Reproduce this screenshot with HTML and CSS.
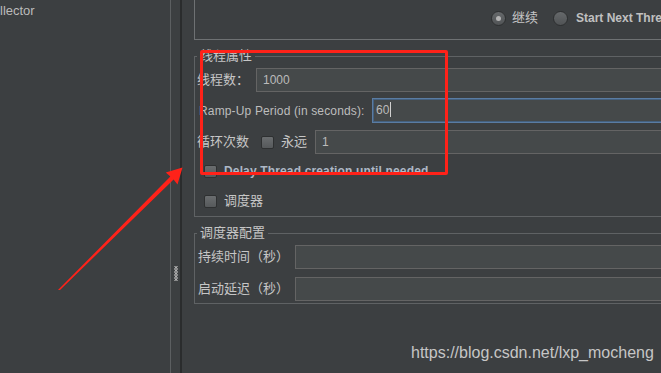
FILE: index.html
```html
<!doctype html>
<html><head>
	<meta charset="utf-8">
	<title>线程组</title>
	<link rel="stylesheet" href="styles.css">
</head><body>
	<div class="frame">
		<div class="tree">
			<div class="tree-item">llector</div>
		</div>
		<div class="splitter">
			<svg class="grip" width="5" height="16" viewBox="0 0 5 16">
				<polyline points="0.5,0 3.5,3 0.5,6 3.5,9 0.5,12 3.5,15" fill="none" stroke="#d6d6d6" stroke-width="1"/>
				<polyline points="3.5,0 0.5,3 3.5,6 0.5,9 3.5,12 0.5,15" fill="none" stroke="#d6d6d6" stroke-width="1"/>
			</svg>
		</div>
		<div class="main">
			<div class="options">
				<span class="radio on"></span><span class="opt cjk">继续</span>
				<span class="radio second"></span><span class="opt strong">Start Next Thread Loop</span>
			</div>

			<fieldset class="group props">
				<legend class="cjk">线程属性</legend>
				<div class="row r1">
					<span class="label cjk w-threads">线程数：</span>
					<div class="field">1000</div>
				</div>
				<div class="row r2">
					<span class="label w-ramp latin">Ramp-Up Period (in seconds):</span>
					<div class="field focus">60<span class="caret"></span></div>
				</div>
				<div class="row r3">
					<span class="label cjk w-loop">循环次数</span>
					<span class="check"></span>
					<span class="label cjk forever">永远</span>
					<div class="field loops">1</div>
				</div>
				<div class="row r4">
					<span class="check indent"></span>
					<span class="label latin strong delay">Delay Thread creation until needed</span>
				</div>
				<div class="row r5">
					<span class="check indent"></span>
					<span class="label cjk">调度器</span>
				</div>
			</fieldset>

			<fieldset class="group sched">
				<legend class="cjk">调度器配置</legend>
				<div class="row s1">
					<span class="label cjk w-sched">持续时间（秒）</span>
					<div class="field"></div>
				</div>
				<div class="row s2">
					<span class="label cjk w-sched">启动延迟（秒）</span>
					<div class="field"></div>
				</div>
			</fieldset>
		</div>
	</div>

	<div class="mark-box"></div>
	<svg class="mark-arrow" width="661" height="373" viewBox="0 0 661 373">
		<polygon points="58,290 60,290 173.6,179.6 177.5,184.5 182.5,167.5 165.8,172.6 170.4,176.6" fill="#ff2219"/>
	</svg>
	<div class="watermark">https://blog.csdn.net/lxp_mocheng</div>
</body></html>
```

FILE: styles.css
```css
html, body {
	margin: 0;
}

body {
	position: relative;
	width: 661px;
	height: 373px;
	overflow: hidden;
	background: #3c3f41;
	color: #bbbbbb;
	font: 12px/14px "Liberation Sans", "Noto Sans CJK SC", sans-serif;
}

.frame {
	display: flex;
	height: 373px;
}

.tree {
	width: 170px;
	flex-shrink: 0;
	border-right: 1px solid #5c5f61;
	overflow: hidden;
}

.tree-item {
	font-size: 13px;
	line-height: 15px;
	padding-top: 3px;
	white-space: nowrap;
}

.splitter {
	width: 11px;
	flex-shrink: 0;
	border-right: 2px solid #2a2c2d;
	padding: 266px 0 0 3px;
	box-sizing: border-box;
}

.grip {
	display: block;
}

.main {
	flex: 1;
	min-width: 0;
	overflow: hidden;
	padding-left: 12px;
}

/* top box with the radio buttons */
.options {
	width: 600px;
	height: 40px;
	padding: 0 0 3px 296px;
	box-sizing: border-box;
	border-left: 1px solid #6e7173;
	border-bottom: 1px solid #6e7173;
	display: flex;
	align-items: center;
	white-space: nowrap;
}

.radio {
	width: 15px;
	height: 15px;
	flex-shrink: 0;
	box-sizing: border-box;
	border-radius: 50%;
	border: 1px solid #2d2f30;
	background: linear-gradient(#66696b, #505355);
	position: relative;
	margin-right: 6px;
}

.radio.on::after {
	content: "";
	position: absolute;
	left: 4px;
	top: 4px;
	width: 5px;
	height: 5px;
	border-radius: 50%;
	background: #b4b4b4;
}

.radio.second {
	margin-left: 15px;
	margin-right: 8px;
}

.opt {
	color: #c0c0c0;
}

.strong {
	font-weight: bold;
}

.cjk {
	font-size: 13px;
	color: #c6c6c6;
}

/* titled groups */
.group {
	width: 600px;
	min-width: 0;
	margin: 9px 0 0;
	padding: 5px 0 4px 2px;
	box-sizing: border-box;
	border: 1px solid #5f6264;
}

.group legend {
	padding: 0 3px;
	margin: 0;
	line-height: 14px;
}

.sched {
	padding-bottom: 2px;
}

.row {
	display: flex;
	align-items: center;
	height: 24px;
}

.props .r2 {
	margin-top: 6px;
	height: 25px;
}

.props .r3 {
	margin-top: 7px;
}

.props .r4 {
	margin-top: 6px;
	height: 22px;
}

.props .r5 {
	margin-top: 8px;
	height: 22px;
}

.sched .s2 {
	margin-top: 8px;
}

.label {
	flex-shrink: 0;
	white-space: nowrap;
}

.latin {
	letter-spacing: 0.15px;
	color: #bdbdbd;
}

.w-threads {
	width: 59px;
}

.w-ramp {
	width: 175px;
	padding-left: 2px;
	box-sizing: border-box;
}

.w-loop {
	width: 64px;
}

.forever {
	margin-left: 7px;
	width: 34px;
}

.w-sched {
	width: 98px;
	padding-left: 1px;
	box-sizing: border-box;
}

.delay {
	color: #aeb8c6;
}

.field {
	flex: 1;
	height: 24px;
	box-sizing: border-box;
	border: 1px solid #646464;
	background: #45494a;
	padding: 0 6px;
	line-height: 22px;
	color: #bbbbbb;
	white-space: nowrap;
}

.field.focus {
	height: 25px;
	border: 1px solid #5a7ca3;
	box-shadow: inset 0 0 0 1px #44607f;
	padding-left: 3px;
	line-height: 23px;
}

.caret {
	display: inline-block;
	width: 1px;
	height: 15px;
	margin-left: 1px;
	vertical-align: -3px;
	background: #d0d0d0;
}

.check {
	width: 13px;
	height: 13px;
	flex-shrink: 0;
	box-sizing: border-box;
	border: 1px solid #2e3031;
	border-radius: 2px;
	background: linear-gradient(#6a6d6f, #56595b);
}

.check.indent {
	margin: 0 7px 0 7px;
}

/* annotations drawn over the screenshot */
.mark-box {
	position: absolute;
	left: 200px;
	top: 50px;
	width: 248px;
	height: 125px;
	box-sizing: border-box;
	border: 3px solid #ff2219;
	border-radius: 2px;
}

.mark-arrow {
	position: absolute;
	left: 0;
	top: 0;
	pointer-events: none;
}

.watermark {
	position: absolute;
	left: 411px;
	top: 344px;
	font: 16px/18px "Liberation Sans", sans-serif;
	color: #c6c6c6;
	white-space: nowrap;
}
```
